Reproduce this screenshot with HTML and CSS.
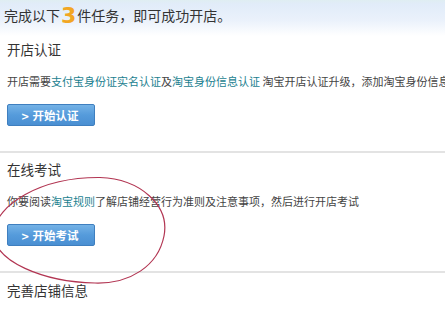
FILE: index.html
```html
<!DOCTYPE html>
<html lang="zh-CN">
<head>
<meta charset="utf-8">
<link rel="stylesheet" href="styles.css">
</head>
<body>
<div class="page">
  <div class="top">完成以下<span class="num">3</span>件任务，即可成功开店。</div>
  <div class="section">
    <div class="title">开店认证</div>
    <div class="desc">开店需要<a class="link">支付宝身份证实名认证</a>及<a class="link">淘宝身份信息认证</a> 淘宝开店认证升级，添加淘宝身份信息认证</div>
    <div class="btn"><span class="chev">&gt;</span>开始认证</div>
  </div>
  <div class="section">
    <div class="title">在线考试</div>
    <div class="desc">你要阅读<a class="link">淘宝规则</a>了解店铺经营行为准则及注意事项，然后进行开店考试</div>
    <div class="btn"><span class="chev">&gt;</span>开始考试</div>
  </div>
  <div class="section last">
    <div class="title">完善店铺信息</div>
  </div>
  <svg class="circle" width="445" height="314" viewBox="0 0 445 314">
    <path d="M 100 177.5 C 140 179, 170 205, 164 236 C 158 266, 130 284, 95 283 C 45 282, -8 262, -6 232 C -4 205, 40 177, 100 177.5 Z" fill="none" stroke="#b23552" stroke-width="1.2"/>
  </svg>
</div>
</body>
</html>
```
FILE: styles.css
```css
* { box-sizing: border-box; }
html, body { margin: 0; padding: 0; background: #fff; }
body {
  font-family: "Noto Sans CJK SC", "Noto Sans", sans-serif;
  color: #333;
  width: 445px;
  height: 314px;
  overflow: hidden;
}
.page { position: relative; width: 445px; height: 314px; overflow: hidden; }
.top {
  height: 36px;
  padding-left: 4px;
  font-size: 14px;
  line-height: 30px;
  color: #333;
  background: linear-gradient(to bottom, #dfeef2 0px, #e1ecf9 4px, #eaf1fb 20px, #ffffff 36px);
  white-space: nowrap;
}
.num {
  color: #f2a623;
  font-size: 22px;
  font-family: "DejaVu Sans", sans-serif;
  font-weight: bold;
  vertical-align: -2px;
  line-height: 20px;
  margin: 0 1px;
}
.section {
  padding-left: 7px;
  padding-top: 3px;
  padding-bottom: 25px;
  border-bottom: 2px solid #e3e3e3;
  margin-left: 7px;
  margin-left: 0;
}
.section + .section { padding-top: 6px; }
.section .title {
  font-size: 13.5px;
  line-height: 20px;
  color: #333;
}
.section .desc {
  margin-top: 14px;
  font-size: 11px;
  line-height: 16px;
  color: #444;
  white-space: nowrap;
}
.link { color: #1c7f90; text-decoration: none; }
.btn {
  margin-top: 15px;
  width: 88px;
  height: 22px;
  border: 1px solid #3f7fbf;
  border-radius: 2px;
  background: linear-gradient(to bottom, #74b2e6 0%, #559bdb 50%, #4a8fd2 100%);
  color: #fff;
  font-size: 11.5px;
  font-weight: bold;
  line-height: 20px;
  padding-left: 13px;
  white-space: nowrap;
}
.chev {
  font-family: "DejaVu Sans", sans-serif;
  font-weight: bold;
  font-size: 10px;
  margin-right: 3px;
}
.section.last { border-bottom: none; padding-top: 7px; }
.circle { position: absolute; left: 0; top: 0; pointer-events: none; }
```
